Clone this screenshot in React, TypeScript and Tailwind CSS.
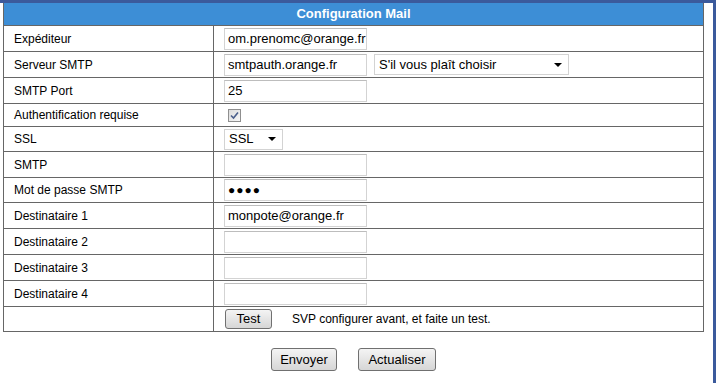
const font = "font-['Liberation_Sans',Arial,sans-serif]";

const rows: { label: string; h: string; kind: string; value?: string }[] = [
  { label: "Expéditeur", h: "h-[26px]", kind: "input", value: "om.prenomc@orange.fr" },
  { label: "Serveur SMTP", h: "h-[26px]", kind: "server", value: "smtpauth.orange.fr" },
  { label: "SMTP Port", h: "h-[26px]", kind: "input", value: "25" },
  { label: "Authentification requise", h: "h-[23px]", kind: "check" },
  { label: "SSL", h: "h-[25px]", kind: "ssl" },
  { label: "SMTP", h: "h-[26px]", kind: "input", value: "" },
  { label: "Mot de passe SMTP", h: "h-[25px]", kind: "password" },
  { label: "Destinataire 1", h: "h-[26px]", kind: "input", value: "monpote@orange.fr" },
  { label: "Destinataire 2", h: "h-[26px]", kind: "input", value: "" },
  { label: "Destinataire 3", h: "h-[26px]", kind: "input", value: "" },
  { label: "Destinataire 4", h: "h-[26px]", kind: "input", value: "" },
];

function TextBox({ value }: { value: string }) {
  return (
    <div className="w-[143px] h-[22px] border border-[#d3d3d3] border-t-[#bdbdbd] bg-white pl-[3px] text-[13px] leading-[20px] text-black overflow-hidden whitespace-nowrap">
      {value}
    </div>
  );
}

function Arrow() {
  return <div className="w-0 h-0 border-l-[4px] border-r-[4px] border-t-[4px] border-l-transparent border-r-transparent border-t-black" />;
}

function Select({ text, w }: { text: string; w: string }) {
  return (
    <div className={`${w} h-[21px] border border-[#d3d3d3] bg-white pl-[4px] pr-[6px] flex items-center justify-between text-[13px] text-black`}>
      <span>{text}</span>
      <Arrow />
    </div>
  );
}

function Btn({ children, w, h }: { children: string; w: string; h: string }) {
  return (
    <div className={`${w} ${h} rounded-[3px] border border-[#707070] bg-gradient-to-b from-[#f4f4f4] to-[#d6d6d6] flex items-center justify-center text-[13px] text-black`}>
      {children}
    </div>
  );
}

function Field({ kind, value }: { kind: string; value?: string }) {
  if (kind === "input") return <TextBox value={value ?? ""} />;
  if (kind === "server")
    return (
      <div className="flex items-center gap-[7px]">
        <TextBox value={value ?? ""} />
        <Select text="S'il vous plaît choisir" w="w-[195px]" />
      </div>
    );
  if (kind === "check")
    return (
      <div className="ml-[4px] w-[13px] h-[13px] border border-[#8f8f8f] bg-gradient-to-br from-[#dcdcdc] to-[#f7f7f7] flex items-center justify-center">
        <svg width="9" height="9" viewBox="0 0 9 9">
          <path d="M1 4.5 L3.5 7 L8 1.5" fill="none" stroke="#4a5f8c" strokeWidth="1.6" />
        </svg>
      </div>
    );
  if (kind === "ssl") return <Select text="SSL" w="w-[59px]" />;
  if (kind === "password")
    return (
      <div className="w-[143px] h-[22px] border border-[#d3d3d3] border-t-[#bdbdbd] bg-white pl-[3px] text-[12px] leading-[20px] tracking-[1px] text-black">
        ●●●●
      </div>
    );
  return null;
}

export default function App() {
  return (
    <div className={`w-[719px] h-[383px] bg-white ${font}`}>
      <div className="w-[716px] h-[383px] border-t-[3px] border-r-[3px] border-[#3b5a9c] pl-[3px]">
        <div className="w-[701px] border-l border-r border-b border-[#666]">
          <div className="h-[22px] bg-[#3d8ed6] flex items-center justify-center text-white font-bold text-[13px]">
            Configuration Mail
          </div>
          {rows.map((r) => (
            <div key={r.label} className={`flex ${r.h} border-t border-[#666]`}>
              <div className="w-[210px] shrink-0 border-r border-[#666] pl-[10px] flex items-center text-[12px] text-black">
                {r.label}
              </div>
              <div className="flex-1 pl-[10px] flex items-center">
                <Field kind={r.kind} value={r.value} />
              </div>
            </div>
          ))}
          <div className="flex h-[25px] border-t border-[#666]">
            <div className="w-[210px] shrink-0 border-r border-[#666]" />
            <div className="flex-1 pl-[11px] flex items-center">
              <Btn w="w-[47px]" h="h-[20px]">Test</Btn>
              <span className="ml-[20px] text-[12px] text-black">SVP configurer avant, et faite un test.</span>
            </div>
          </div>
        </div>
        <div className="w-[701px] flex justify-center gap-[21px] mt-[16px]">
          <Btn w="w-[66px]" h="h-[23px]">Envoyer</Btn>
          <Btn w="w-[78px]" h="h-[23px]">Actualiser</Btn>
        </div>
      </div>
    </div>
  );
}
